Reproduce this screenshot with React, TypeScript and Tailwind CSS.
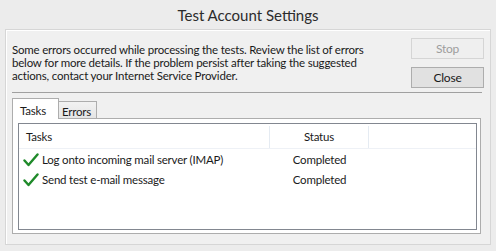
import React from "react";

function Check() {
  return (
    <svg width="16" height="14" viewBox="0 0 16 14" className="shrink-0">
      <path d="M1.5 7.5 L5.5 12 L14.5 1.5" fill="none" stroke="#1f8a2a" strokeWidth="2.4" strokeLinecap="round" strokeLinejoin="round" />
    </svg>
  );
}

export default function App() {
  const font = { fontFamily: 'Lato, "Noto Sans", sans-serif' };
  return (
    <div className="w-[496px] h-[251px] bg-[#ececec] flex flex-col text-[#1a1a1a] overflow-hidden text-[11.5px] tracking-[-0.2px]" style={font}>
      <div className="h-[29px] flex items-center justify-center text-[15px] tracking-normal text-[#2b2b2b] leading-none pt-[1px]">
        Test Account Settings
      </div>
      <div className="mx-[5px] h-[216px] border border-[#d6d6d6] bg-[#f0f0f0] shadow-[inset_1px_1px_0_#ffffff] flex flex-col pl-[6px] pr-[6px]">
        <div className="flex justify-between items-start">
          <div className="pt-[13px] leading-[13px] whitespace-nowrap">
            <div>Some errors occurred while processing the tests. Review the list of errors</div>
            <div>below for more details. If the problem persist after taking the suggested</div>
            <div>actions, contact your Internet Service Provider.</div>
          </div>
          <div className="pt-[8px] flex flex-col gap-[8px] w-[73px]">
            <div className="h-[21px] border border-[#d5d5d5] bg-[#efefef] text-[#9d9d9d] text-[12px] flex items-center justify-center">Stop</div>
            <div className="h-[21px] border border-[#adadad] bg-[#e1e1e1] text-[#1a1a1a] text-[12px] flex items-center justify-center">Close</div>
          </div>
        </div>
        <div className="mt-[4px] h-[1px] bg-[#a0a0a0] mr-[2px]"></div>
        <div className="mt-[5px] flex items-end h-[20px] relative z-10">
          <div className="w-[47px] h-[21px] border border-b-0 border-[#adadad] bg-white flex items-start pl-[7px] pt-[3px] -mb-[1px]">Tasks</div>
          <div className="w-[38px] h-[17px] border border-l-0 border-b-0 border-[#adadad] bg-gradient-to-b from-[#f2f2f2] to-[#e5e5e5] flex items-start pl-[3px] pt-[1px]">Errors</div>
        </div>
        <div className="w-[469px] h-[116px] border border-[#adadad] bg-white pl-[5px] pr-[3px] pt-[4px] pb-[3px] flex">
          <div className="flex-1 border border-[#828790] bg-white flex flex-col">
            <div className="h-[25px] flex border-b border-[#eef1f6] items-center pt-[2px]">
              <div className="w-[251px] pl-[7px] h-full flex items-center border-r border-[#e5ebf2]">Tasks</div>
              <div className="w-[99px] h-full flex items-center justify-center border-r border-[#e5ebf2]">Status</div>
            </div>
            <div className="h-[20px] flex items-center mt-[1px]">
              <div className="w-[251px] pl-[4px] flex items-center gap-[3px]"><Check />Log onto incoming mail server (IMAP)</div>
              <div className="w-[99px] flex justify-center">Completed</div>
            </div>
            <div className="h-[20px] flex items-center">
              <div className="w-[251px] pl-[4px] flex items-center gap-[3px]"><Check />Send test e-mail message</div>
              <div className="w-[99px] flex justify-center">Completed</div>
            </div>
          </div>
        </div>
      </div>
    </div>
  );
}
